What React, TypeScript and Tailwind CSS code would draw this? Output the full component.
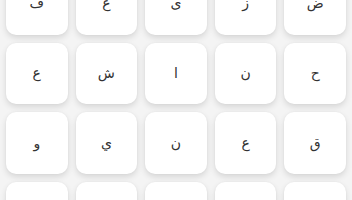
import React from 'react';

const rows = [
  ['ف', 'غ', 'ى', 'ز', 'ض'],
  ['ع', 'ش', 'ا', 'ن', 'ح'],
  ['و', 'ي', 'ن', 'ع', 'ق'],
  ['ب', 'ت', 'م', 'ل', 'ك'],
];

const App = () => {
  return (
    <div className="h-[200px] overflow-hidden bg-[#f4f4f4]">
      <div className="-mt-[27px] grid grid-cols-5 gap-2 px-[6px]">
        {rows.flat().map((letter, i) => (
          <div
            key={i}
            className="aspect-square rounded-[10px] bg-white shadow-[0_3px_6px_rgba(0,0,0,0.12),0_0_2px_rgba(0,0,0,0.05)] flex items-center justify-center text-[14px] text-[#333] font-['DejaVu_Sans',sans-serif]"
          >
            {letter}
          </div>
        ))}
      </div>
    </div>
  );
};

export default App;
